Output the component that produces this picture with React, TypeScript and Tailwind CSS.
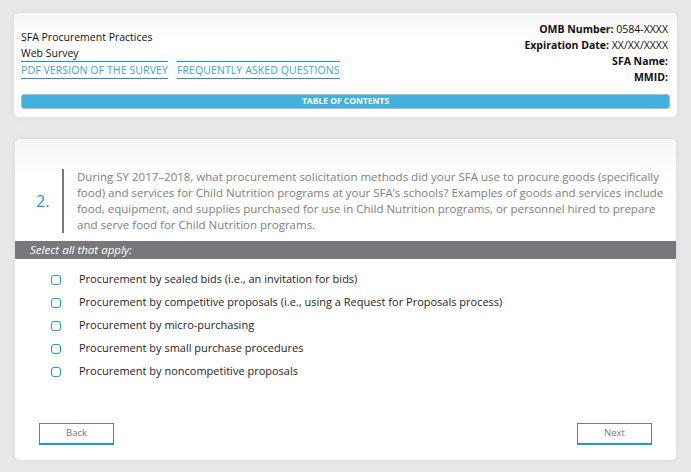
import { useState } from 'react';

const options = [
  'Procurement by sealed bids (i.e., an invitation for bids)',
  'Procurement by competitive proposals (i.e., using a Request for Proposals process)',
  'Procurement by micro-purchasing',
  'Procurement by small purchase procedures',
  'Procurement by noncompetitive proposals',
];

export default function App() {
  const [checked, setChecked] = useState<boolean[]>(options.map(() => false));

  const toggle = (idx: number) => {
    setChecked(checked.map((c, i) => (i === idx ? !c : c)));
  };

  return (
    <div
      className="min-h-[472px] bg-[#e8e8e8] px-[14px] pt-[13px] pb-3"
      style={{ fontFamily: '"Open Sans", "Noto Sans", sans-serif' }}
    >
      {/* header card */}
      <div className="rounded-[5px] bg-gradient-to-b from-[#f6f6f6] to-white to-[30%] shadow-[0_0_6px_rgba(0,0,0,0.06)] px-[7px] pt-[8px] pb-[8px]">
        <div className="flex justify-between">
          <div className="pt-[8px] text-[10.5px] leading-[16px] text-[#111]">
            <p>SFA Procurement Practices</p>
            <p>Web Survey</p>
            <div className="flex gap-[9px]">
              <a className="border-y border-[#1b97d4] text-[#3ea4d6] tracking-[0.1px]">PDF VERSION OF THE SURVEY</a>
              <a className="border-y border-[#1b97d4] text-[#3ea4d6] tracking-[0.1px]">FREQUENTLY ASKED QUESTIONS</a>
            </div>
          </div>
          <div className="text-right text-[10.5px] leading-[16px] text-[#111] pr-[2px]">
            <p><span className="font-bold">OMB Number:</span> 0584-XXXX</p>
            <p><span className="font-bold">Expiration Date:</span> XX/XX/XXXX</p>
            <p className="font-bold">SFA Name:</p>
            <p className="font-bold">MMID:</p>
          </div>
        </div>
        <div className="mt-[9px] h-[15px] rounded-[3px] border border-[#b9b9b9] bg-[#42b1dd] flex items-center justify-center text-[8.5px] font-bold text-white">
          TABLE OF CONTENTS
        </div>
      </div>

      {/* question card */}
      <div className="mt-[22px] mx-[1px] rounded-[5px] bg-gradient-to-b from-[#f6f6f6] to-white to-[12%] shadow-[0_0_6px_rgba(0,0,0,0.06)] pt-[30px] pb-[15px]">
        <div className="flex items-center pl-[21px] pr-[12px]">
          <span className="w-[26px] shrink-0 text-[16px] text-[#1a9ad6]">2.</span>
          <div className="border-l-2 border-[#7a7a7a] pl-[13px] text-[11.5px] leading-[16px] text-[#808080]">
            During SY 2017–2018, what procurement solicitation methods did your SFA use to procure goods (specifically food) and services for Child Nutrition programs at your SFA’s schools? Examples of goods and services include food, equipment, and supplies purchased for use in Child Nutrition programs, or personnel hired to prepare and serve food for Child Nutrition programs.
          </div>
        </div>

        <div className="mt-[8px] h-[18px] bg-[#78777b] pl-[15px] text-[11.5px] italic leading-[18px] text-white">
          Select all that apply:
        </div>

        <div className="mt-[9px] flex flex-col pl-[36px]">
          {options.map((opt, idx) => (
            <label key={idx} className="flex items-center h-[23px] cursor-pointer">
              <span
                onClick={() => toggle(idx)}
                className={`w-[10px] h-[10px] rounded-[3px] border border-[#1a9ad6] ${checked[idx] ? 'bg-[#1a9ad6]' : 'bg-white'}`}
              ></span>
              <span className="ml-[18px] text-[11px] text-[#1e1e1e]">{opt}</span>
            </label>
          ))}
        </div>

        <div className="mt-[40px] flex justify-between px-[24px]">
          <button className="w-[75px] h-[22px] border border-[#7a7a7a] border-b-2 border-b-[#1a9ad6] text-[9.5px] text-[#777] bg-white">
            Back
          </button>
          <button className="w-[75px] h-[22px] border border-[#7a7a7a] border-b-2 border-b-[#1a9ad6] text-[9.5px] text-[#777] bg-white">
            Next
          </button>
        </div>
      </div>
    </div>
  );
}
